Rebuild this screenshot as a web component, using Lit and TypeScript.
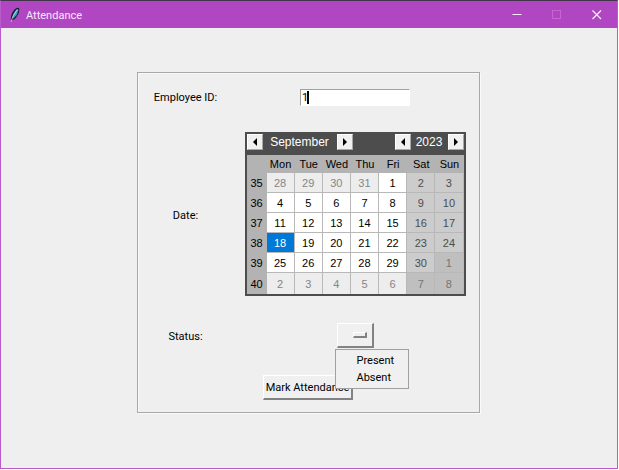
import { LitElement, html, css, svg } from "lit";
import { customElement, property, state } from "lit/decorators.js";
import { classMap } from "lit/directives/class-map.js";

interface Day {
  day: number;
  other: boolean;
}

@customElement("month-calendar")
class MonthCalendar extends LitElement {
  @property({ type: Number }) year = 2023;
  @property({ type: Number }) month = 8;
  @property({ type: Number }) selected = 18;

  static styles = css`
    :host {
      display: block;
      box-sizing: border-box;
      width: 221px;
      padding: 2px;
      background: #4d4d4d;
      font: 11px/16px "Liberation Sans", Arial, sans-serif;
    }
    .header {
      display: flex;
      justify-content: space-between;
      align-items: start;
      height: 21px;
      color: #fff;
      font-size: 12px;
    }
    .group {
      display: flex;
      align-items: center;
    }
    .name {
      text-align: center;
    }
    .month {
      width: 74px;
    }
    .year {
      width: 37px;
    }
    .arrow {
      display: flex;
      align-items: center;
      justify-content: center;
      box-sizing: border-box;
      width: 16px;
      height: 16px;
      padding: 0;
      border: 1px solid #fff;
      border-right-color: #a8a8a8;
      border-bottom-color: #a8a8a8;
      background: #f0f0f0;
    }
    table {
      width: 100%;
      table-layout: fixed;
      border-collapse: separate;
      border-spacing: 0;
      background: #b3b3b3;
      text-align: center;
    }
    th,
    td {
      box-sizing: border-box;
      height: 20px;
      padding: 0;
      font-weight: normal;
      color: #000;
    }
    thead th {
      height: 18px;
    }
    .week {
      width: 20px;
    }
    tbody tr:last-child td {
      height: 21px;
      border-bottom: 0;
    }
    td {
      background: #fff;
      border: solid #b8b8b8;
      border-width: 0 1px 1px 0;
    }
    td.weekend {
      background: #cccccc;
      color: #4d4d4d;
    }
    td.other {
      background: #ededed;
      color: #858585;
    }
    td.other.weekend {
      background: #bfbfbf;
      color: #757575;
    }
    td.selected {
      background: #0078d7;
      color: #fff;
    }
  `;

  private get weeks(): Day[][] {
    const first = new Date(this.year, this.month, 1);
    const lead = (first.getDay() + 6) % 7;
    return Array.from({ length: 6 }, (_, w) =>
      Array.from({ length: 7 }, (_, d) => {
        const date = new Date(this.year, this.month, 1 - lead + w * 7 + d);
        return { day: date.getDate(), other: date.getMonth() !== this.month };
      })
    );
  }

  private shift(months: number) {
    const next = new Date(this.year, this.month + months, 1);
    this.year = next.getFullYear();
    this.month = next.getMonth();
  }

  private weekNumber(row: number) {
    const first = new Date(this.year, this.month, 1);
    const lead = (first.getDay() + 6) % 7;
    const thursday = new Date(this.year, this.month, 4 - lead + row * 7);
    const start = new Date(thursday.getFullYear(), 0, 1);
    return 1 + Math.floor(Math.round((+thursday - +start) / 864e5) / 7);
  }

  private arrow(label: string, months: number, forward: boolean) {
    return html`<button class="arrow" type="button" aria-label=${label} @click=${() => this.shift(months)}>
      <svg width="4" height="8" viewBox="0 0 4 8">
        ${forward ? svg`<path d="M0 0L4 4L0 8Z" />` : svg`<path d="M4 0L0 4L4 8Z" />`}
      </svg>
    </button>`;
  }

  render() {
    const name = new Date(this.year, this.month, 1).toLocaleString("en", { month: "long" });
    return html`
      <div class="header">
        <div class="group">
          ${this.arrow("Previous month", -1, false)}
          <span class="name month">${name}</span>
          ${this.arrow("Next month", 1, true)}
        </div>
        <div class="group">
          ${this.arrow("Previous year", -12, false)}
          <span class="name year">${this.year}</span>
          ${this.arrow("Next year", 12, true)}
        </div>
      </div>
      <table>
        <thead>
          <tr>
            <th class="week"></th>
            ${["Mon", "Tue", "Wed", "Thu", "Fri", "Sat", "Sun"].map((d) => html`<th scope="col">${d}</th>`)}
          </tr>
        </thead>
        <tbody>
          ${this.weeks.map(
            (week, w) => html`<tr>
              <th scope="row">${this.weekNumber(w)}</th>
              ${week.map(
                ({ day, other }, d) => html`<td
                  class=${classMap({
                    weekend: d > 4,
                    other,
                    selected: !other && day === this.selected,
                  })}
                  @click=${() => {
                    if (!other) this.selected = day;
                  }}
                >
                  ${day}
                </td>`
              )}
            </tr>`
          )}
        </tbody>
      </table>
    `;
  }
}

@customElement("app-root")
class AppRoot extends LitElement {
  @state() private status = "";
  @state() private open = true;

  static styles = css`
    :host {
      display: flex;
      flex-direction: column;
      box-sizing: border-box;
      min-height: 100vh;
      padding: 0 1px 1px 0;
      background: #fff;
      color: #000;
      font: 11px/16px Roboto, "Noto Sans", sans-serif;
    }
    .window {
      flex: 1;
      display: flex;
      flex-direction: column;
      border: 1px solid #b95ccb;
      border-top-color: #43334b;
      background: #efefef;
    }
    .titlebar {
      display: flex;
      align-items: center;
      height: 27px;
      background: #b146c2;
      color: #f8e8fa;
    }
    .logo {
      margin: 0 5px 0 8px;
    }
    .title {
      flex: 1;
      margin: 0;
      padding-top: 2px;
      font: inherit;
    }
    .caption {
      display: flex;
      align-items: center;
      justify-content: center;
      width: 40px;
      height: 27px;
      padding: 0;
      border: 0;
      background: none;
      color: #fbeefc;
    }
    .caption:disabled {
      color: #c566d3;
    }
    main {
      display: flex;
      justify-content: center;
      padding: 44px 18px 44px 16px;
    }
    .frame {
      display: grid;
      grid-template-columns: 94px 247px;
      justify-items: center;
      align-items: center;
      padding: 15px 0 12px;
      border: 1px solid #a8a8a8;
      box-shadow: inset 1px 1px #f8f8f8, 1px 1px #fafafa;
    }
    .label {
      padding: 2px 0 0 2px;
    }
    .entry {
      position: relative;
      display: flex;
    }
    .entry input {
      box-sizing: border-box;
      width: 110px;
      height: 17px;
      padding: 0 1px;
      border: 1px solid #fff;
      border-top-color: #a0a0a0;
      border-left-color: #a0a0a0;
      background: #fff;
      color: #000;
      font: inherit;
      outline: none;
    }
    .caret {
      position: absolute;
      left: 7px;
      top: 2px;
      width: 2px;
      height: 13px;
      background: #000;
    }
    month-calendar {
      margin: 26px 0 27px;
    }
    .picker {
      position: relative;
      display: flex;
    }
    .picker select {
      appearance: none;
      box-sizing: border-box;
      width: 37px;
      height: 25px;
      padding: 0 4px;
      border: solid;
      border-width: 1px 2px 2px 1px;
      border-color: #fff #828282 #828282 #fff;
      border-radius: 0;
      background: #f0f0f0;
      font: inherit;
      outline: none;
    }
    .indicator {
      position: absolute;
      right: 7px;
      top: 9px;
      box-sizing: border-box;
      width: 14px;
      height: 6px;
      border: solid;
      border-width: 1px 2px 2px 1px;
      border-color: #fff #828282 #828282 #fff;
      pointer-events: none;
    }
    .menu {
      position: absolute;
      z-index: 1;
      left: -2px;
      top: 26px;
      box-sizing: border-box;
      width: 74px;
      padding: 2px;
      border: 1px solid #a0a0a0;
      background: #f0f0f0;
    }
    .item {
      display: block;
      width: 100%;
      padding: 1px 0 0 19px;
      border: 0;
      background: none;
      color: #000;
      font: inherit;
      text-align: left;
    }
    .submit {
      grid-column: 1 / -1;
      box-sizing: border-box;
      height: 25px;
      margin-top: 27px;
      padding: 1px 2px 0;
      border: solid;
      border-width: 1px 2px 2px 1px;
      border-color: #fff #828282 #828282 #fff;
      background: #f0f0f0;
      color: #000;
      font: inherit;
    }
  `;

  private choose(value: string) {
    this.status = value;
    this.open = false;
  }

  render() {
    return html`
      <div class="window">
        <header class="titlebar">
          <svg class="logo" width="12" height="16" viewBox="0 0 12 16">
            <path d="M2 15Q1 8 5 3Q8 0 10 1Q11 5 8 9Q6 13 3 13Z" fill="#17202c" />
            <path d="M3.5 10.5Q4 6 8 2Q9.5 1.5 9.3 3.5Q8.5 8 4.5 11.5Z" fill="#4b9cc9" />
            <path d="M2 15Q3 9 8 3" fill="none" stroke="#d8edf6" stroke-width="0.7" />
          </svg>
          <h1 class="title">Attendance</h1>
          <button class="caption" type="button" aria-label="Minimize">
            <svg width="10" height="10" viewBox="0 0 10 10"><path d="M0.5 4.5H9.5" stroke="currentColor" /></svg>
          </button>
          <button class="caption" type="button" aria-label="Maximize" disabled>
            <svg width="10" height="10" viewBox="0 0 10 10">
              <rect x="0.5" y="0.5" width="8" height="8" fill="none" stroke="currentColor" />
            </svg>
          </button>
          <button class="caption" type="button" aria-label="Close">
            <svg width="10" height="10" viewBox="0 0 10 10">
              <path d="M0.5 0.5L9 9M9 0.5L0.5 9" stroke="currentColor" stroke-width="1.2" />
            </svg>
          </button>
        </header>
        <main>
          <form class="frame" @submit=${(e: Event) => e.preventDefault()}>
            <label class="label" for="employee">Employee ID:</label>
            <div class="entry">
              <input id="employee" type="text" value="1" />
              <span class="caret"></span>
            </div>
            <span class="label">Date:</span>
            <month-calendar aria-label="Date"></month-calendar>
            <label class="label" for="status">Status:</label>
            <div class="picker">
              <select
                id="status"
                .value=${this.status}
                @change=${(e: Event) => this.choose((e.target as HTMLSelectElement).value)}
              >
                <option value=""></option>
                <option>Present</option>
                <option>Absent</option>
              </select>
              <span class="indicator"></span>
              ${this.open
                ? html`<div class="menu" role="menu">
                    ${["Present", "Absent"].map(
                      (s) => html`<button class="item" type="button" role="menuitem" @click=${() => this.choose(s)}>
                        ${s}
                      </button>`
                    )}
                  </div>`
                : null}
            </div>
            <button class="submit" type="submit">Mark Attendance</button>
          </form>
        </main>
      </div>
    `;
  }
}
